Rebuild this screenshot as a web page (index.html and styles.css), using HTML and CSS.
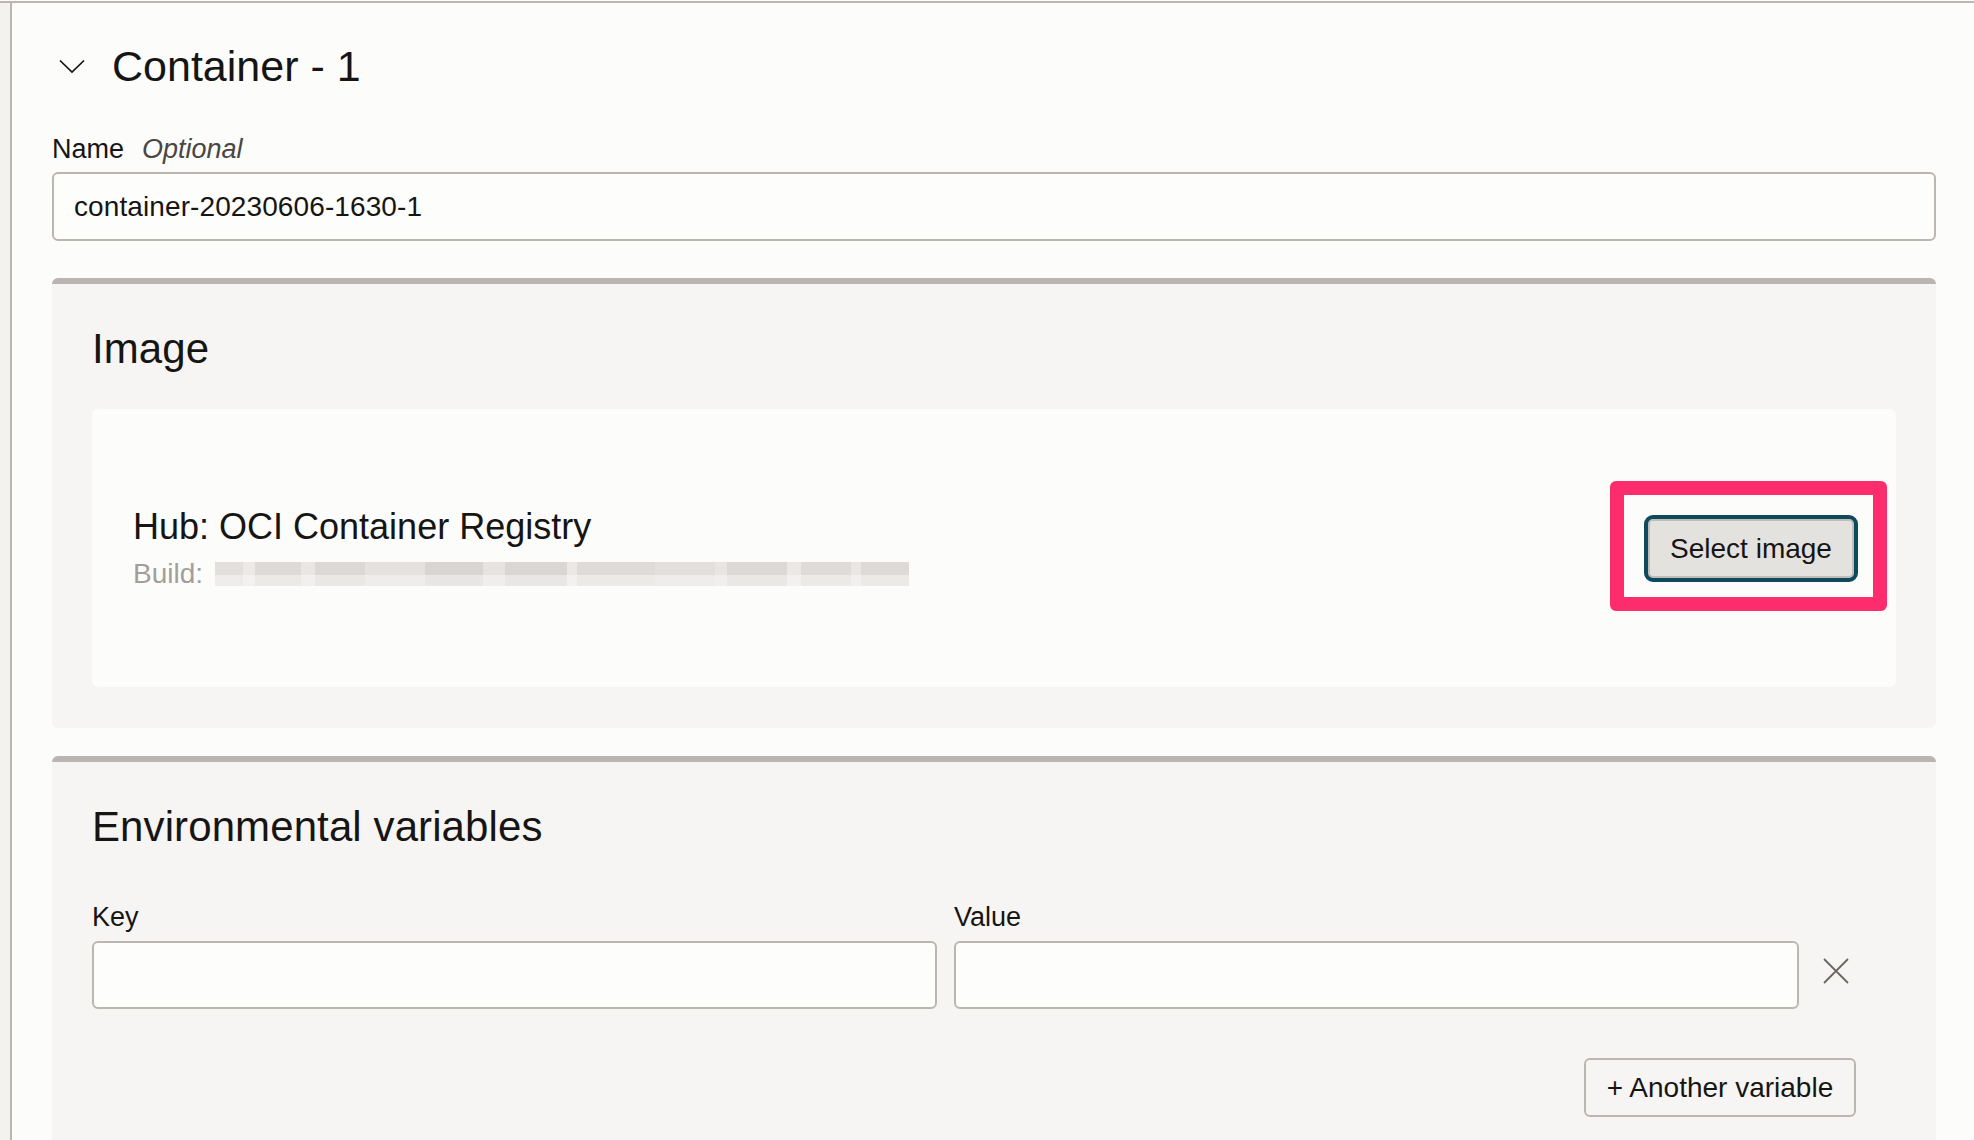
FILE: index.html
```html
<!DOCTYPE html>
<html lang="en">
<head>
<meta charset="utf-8">
<title>Container - 1</title>
<link rel="stylesheet" href="styles.css">
</head>
<body>
<div class="page">
  <div class="rail"></div>
  <main class="main">
    <div class="header">
      <svg class="chevron" width="26" height="15" viewBox="0 0 26 15" aria-hidden="true">
        <polyline points="1,1.5 13,13 25,1.5" fill="none" stroke="#161513" stroke-width="1.7"/>
      </svg>
      <h1 class="title">Container - 1</h1>
    </div>

    <div class="field-label">Name<span class="optional">Optional</span></div>
    <div class="text-input name-input">container-20230606-1630-1</div>

    <section class="card">
      <h2 class="card-title">Image</h2>
      <div class="image-panel">
        <div class="image-info">
          <div class="hub">Hub: OCI Container Registry</div>
          <div class="build">Build:<span class="blurred"></span></div>
        </div>
        <div class="highlight">
          <button class="select-btn">Select image</button>
        </div>
      </div>
    </section>

    <section class="card env-card">
      <h2 class="card-title">Environmental variables</h2>
      <div class="env-grid">
        <div class="field-label">Key</div>
        <div class="field-label">Value</div>
        <div></div>
        <div class="text-input env-input"></div>
        <div class="text-input env-input"></div>
        <div class="remove">
          <svg width="28" height="28" viewBox="0 0 28 28" aria-hidden="true">
            <path d="M2 2 L26 26 M26 2 L2 26" stroke="#6b6661" stroke-width="1.8" fill="none"/>
          </svg>
        </div>
      </div>
      <div class="env-actions">
        <button class="add-btn">+ Another variable</button>
      </div>
    </section>
  </main>
</div>
</body>
</html>
```

FILE: styles.css
```css
* { box-sizing: border-box; }

html, body {
  margin: 0;
  padding: 0;
  background: #fcfcfb;
  color: #161513;
  font-family: "Liberation Sans", Arial, sans-serif;
}

.page {
  margin-top: 1px;
  border-top: 2px solid #bcb6b0;
  display: flex;
  min-height: 1139px;
}

.rail {
  width: 12px;
  flex: none;
  background: #f3f2f0;
  border-right: 2px solid #bcb6b0;
}

.main {
  flex: 1;
  padding: 39px 38px 0 40px;
  overflow: hidden;
}

.header {
  display: flex;
  align-items: center;
  height: 48px;
  padding-left: 7px;
}

.chevron {
  flex: none;
  margin-right: 27px;
}

.title {
  margin: 0;
  font-size: 43px;
  font-weight: 400;
  line-height: 48px;
}

.field-label {
  font-size: 27px;
  line-height: 30px;
  color: #161513;
}

.main > .field-label {
  margin-top: 44px;
}

.optional {
  font-style: italic;
  color: #4a4642;
  margin-left: 18px;
}

.text-input {
  background: #fdfdfc;
  border: 2px solid #bcb6b0;
  border-radius: 6px;
  font-size: 28px;
  letter-spacing: 0.1px;
  display: flex;
  align-items: center;
  padding: 0 20px;
}

.name-input {
  margin-top: 8px;
  height: 69px;
}

.card {
  margin-top: 37px;
  background: #f6f5f4;
  border-top: 6px solid #bab5b0;
  border-radius: 6px;
  padding: 41px 40px 41px 40px;
}

.card-title {
  margin: 0;
  font-size: 42px;
  font-weight: 400;
  line-height: 48px;
  letter-spacing: 0.1px;
}

.image-panel {
  margin-top: 36px;
  height: 278px;
  background: #fcfcfb;
  border-radius: 6px;
  display: flex;
  align-items: center;
  justify-content: space-between;
  padding: 0 9px 0 41px;
}

.hub {
  font-size: 36px;
  line-height: 42px;
}

.build {
  margin-top: 10px;
  font-size: 28px;
  line-height: 32px;
  color: #a39e99;
  display: flex;
  align-items: center;
}

.blurred {
  display: inline-block;
  margin-left: 12px;
  width: 694px;
  height: 24px;
  background:
    linear-gradient(180deg, rgba(252,252,251,0) 0 55%, rgba(252,252,251,0.45) 55% 100%),
    linear-gradient(90deg,
      #e2dfdc 0 28px, #ece9e7 28px 40px, #dedad7 40px 86px, #e9e6e4 86px 100px,
      #dcd8d5 100px 150px, #e4e1de 150px 210px, #d9d5d2 210px 268px, #e6e3e0 268px 290px,
      #dad6d3 290px 352px, #ebe8e6 352px 362px, #dfdbd8 362px 440px, #e2dfdc 440px 500px,
      #e8e5e3 500px 512px, #dcd8d5 512px 572px, #ebe8e6 572px 586px, #dfdbd8 586px 636px,
      #e9e6e4 636px 646px, #dedad7 646px 694px);
}

.highlight {
  border: 14px solid #fd2c6c;
  border-radius: 6px;
  padding: 20px 15px 15px 20px;
  margin-bottom: 4px;
}

.select-btn {
  display: block;
  width: 214px;
  height: 67px;
  background: #e4e2df;
  border: 4px solid #0d4a5e;
  border-radius: 9px;
  box-shadow: inset 0 0 0 2px #c2bdb7;
  font-family: "Liberation Sans", Arial, sans-serif;
  font-size: 28px;
  color: #161513;
  padding: 0;
}

.env-card {
  margin-top: 28px;
  padding-bottom: 40px;
}

.env-grid {
  margin-top: 51px;
  display: grid;
  grid-template-columns: 1fr 1fr 80px;
  column-gap: 17px;
  row-gap: 9px;
}

.env-input {
  height: 68px;
}

.remove {
  display: flex;
  align-items: center;
  padding-left: 6px;
  margin-top: -9px;
}

.env-actions {
  margin-top: 49px;
  display: flex;
  justify-content: flex-end;
  padding-right: 40px;
}

.add-btn {
  height: 59px;
  width: 272px;
  background: #f6f5f4;
  border: 2px solid #bcb6b0;
  border-radius: 6px;
  font-family: "Liberation Sans", Arial, sans-serif;
  font-size: 28px;
  color: #161513;
  padding: 0;
}
```
